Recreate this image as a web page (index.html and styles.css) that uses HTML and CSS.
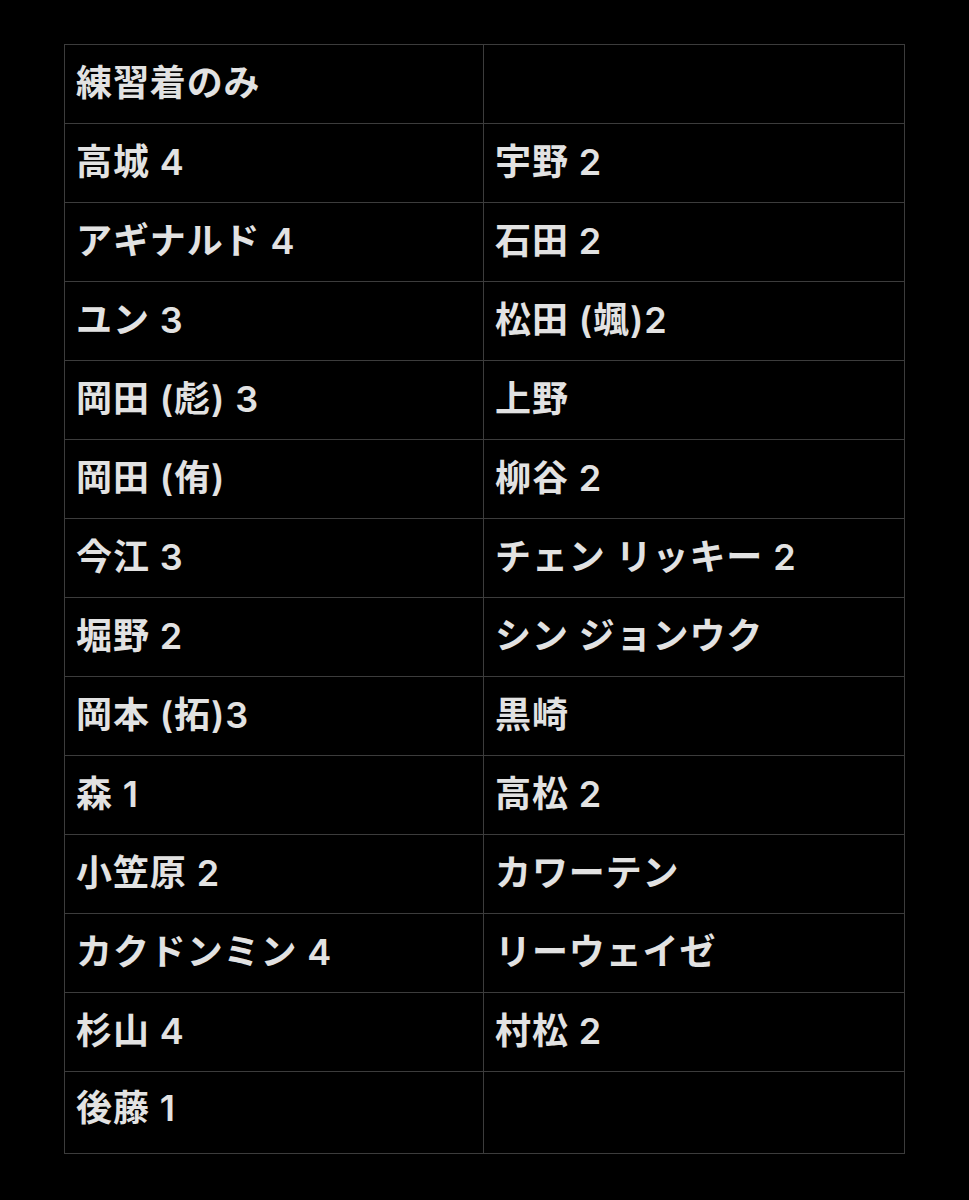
FILE: index.html
```html
<!DOCTYPE html>
<html lang="ja">
<head>
<meta charset="utf-8">
<link rel="stylesheet" href="styles.css">
</head>
<body>
<table class="roster">
<tr><td>練習着のみ</td><td></td></tr>
<tr><td>高城 4</td><td>宇野 2</td></tr>
<tr><td>アギナルド 4</td><td>石田 2</td></tr>
<tr><td>ユン 3</td><td>松田 (颯)2</td></tr>
<tr><td>岡田 (彪) 3</td><td>上野</td></tr>
<tr><td>岡田 (侑)</td><td>柳谷 2</td></tr>
<tr><td>今江 3</td><td>チェン リッキー 2</td></tr>
<tr><td>堀野 2</td><td>シン ジョンウク</td></tr>
<tr><td>岡本 (拓)3</td><td>黒崎</td></tr>
<tr><td>森 1</td><td>高松 2</td></tr>
<tr><td>小笠原 2</td><td>カワーテン</td></tr>
<tr><td>カクドンミン 4</td><td>リーウェイゼ</td></tr>
<tr><td>杉山 4</td><td>村松 2</td></tr>
<tr class="last"><td>後藤 1</td><td></td></tr>
</table>
</body>
</html>
```
FILE: styles.css
```css
html, body {
  margin: 0;
  padding: 0;
  background: #000;
}
body {
  padding: 44px 0 0 64px;
  width: 969px;
  height: 1200px;
  box-sizing: border-box;
}
.roster {
  border-collapse: collapse;
  width: 841px;
  table-layout: fixed;
  font-family: Inter, "Noto Sans CJK JP", sans-serif;
  font-weight: 600;
  font-size: 36px;
  letter-spacing: 0.9px;
  color: #e2e2e2;
}
.roster td {
  border: 1px solid #3c3c3c;
  height: 79px;
  padding: 0 0 9px 11px;
  box-sizing: border-box;
  vertical-align: middle;
  white-space: nowrap;
}
.roster td:first-child {
  width: 419px;
}
.roster tr.last td {
  height: 82px;
  padding-bottom: 15px;
}
```
